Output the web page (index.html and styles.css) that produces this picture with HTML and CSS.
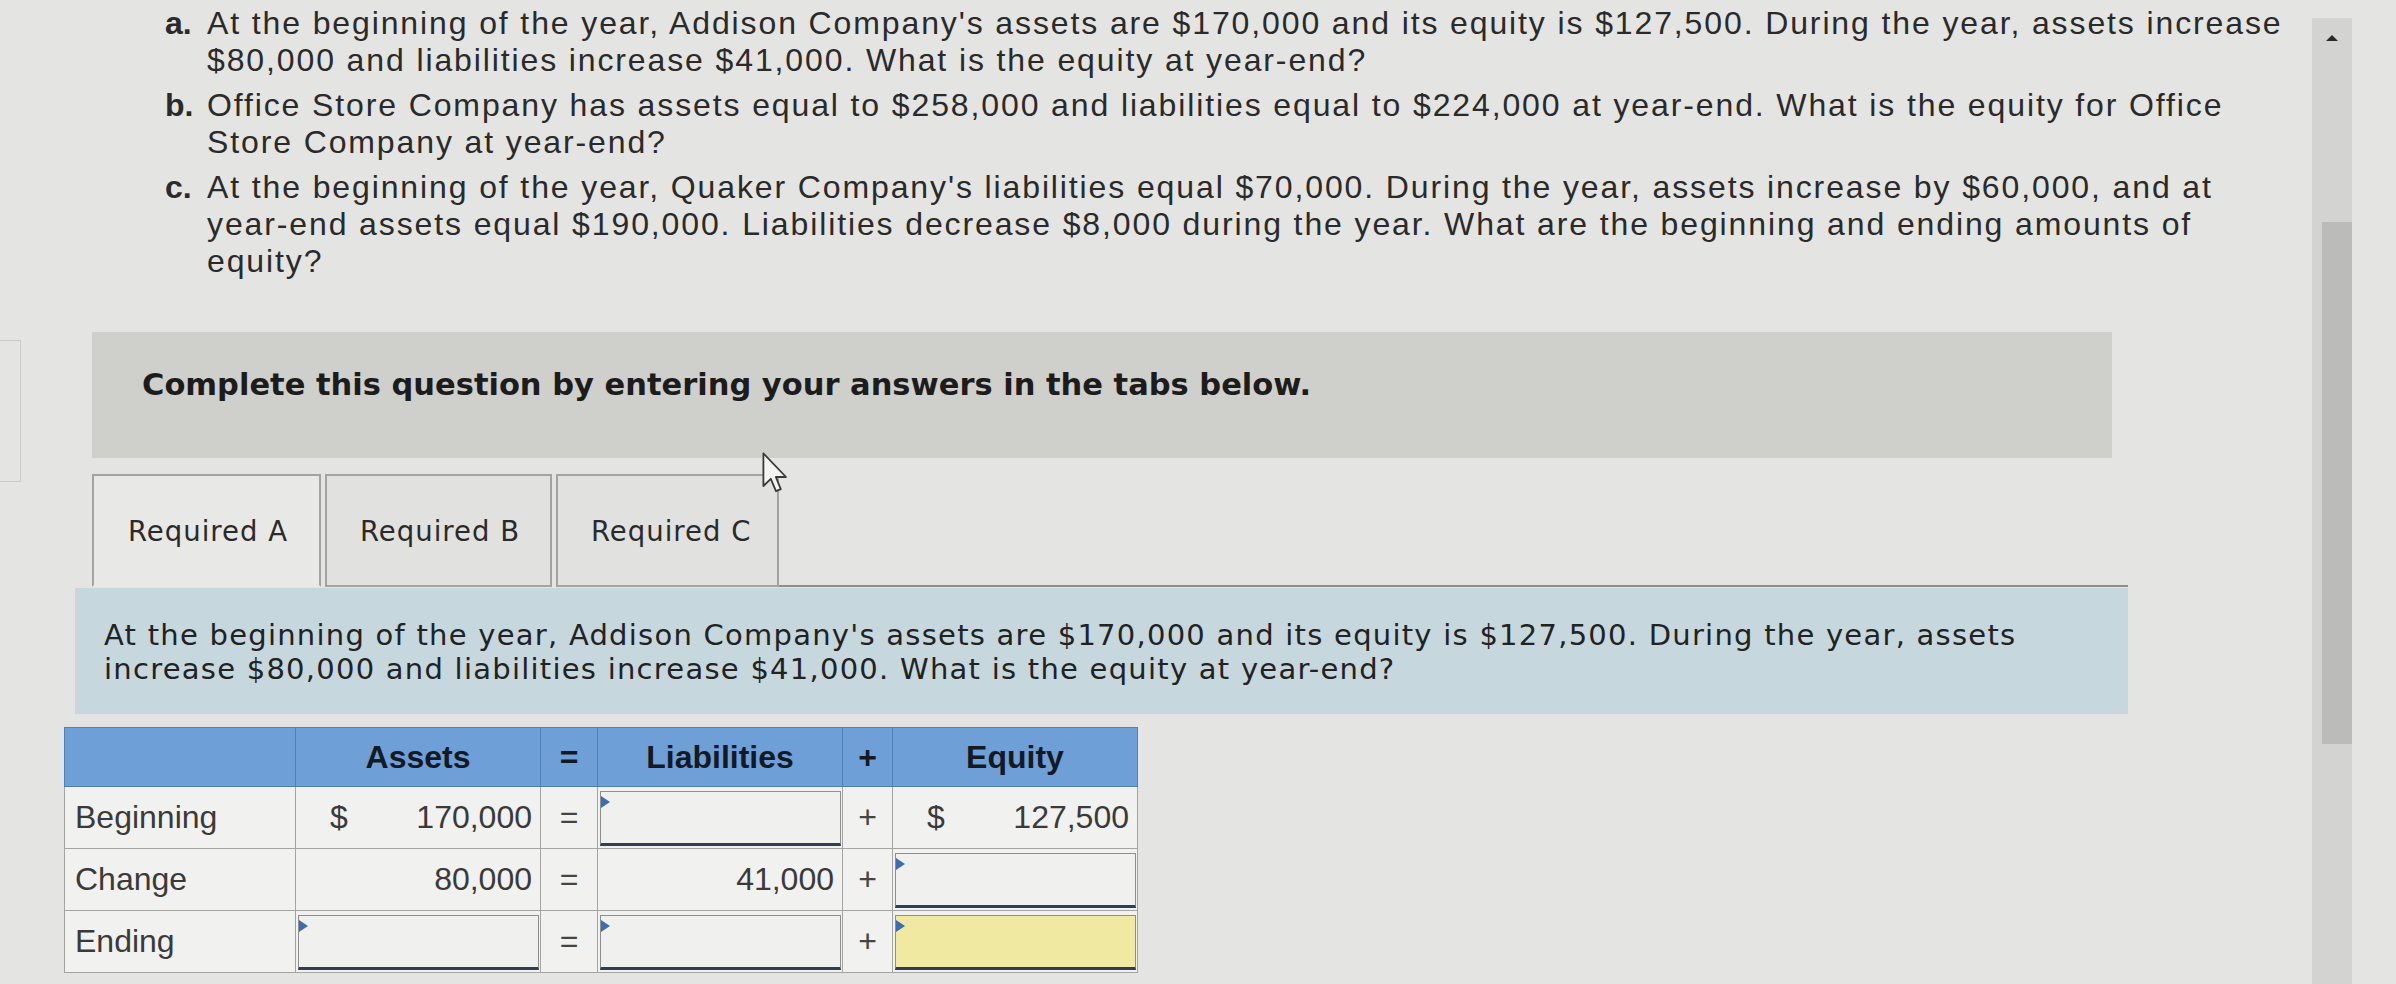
FILE: index.html
```html
<!DOCTYPE html>
<html>
<head>
<meta charset="utf-8">
<link rel="stylesheet" href="styles.css">
</head>
<body>
<div class="main">
  <div class="problems">
    <div class="item"><span class="marker">a.</span><span class="text">At the beginning of the year, Addison Company's assets are $170,000 and its equity is $127,500. During the year, assets increase<br>$80,000 and liabilities increase $41,000. What is the equity at year-end?</span></div>
    <div class="item"><span class="marker">b.</span><span class="text">Office Store Company has assets equal to $258,000 and liabilities equal to $224,000 at year-end. What is the equity for Office<br>Store Company at year-end?</span></div>
    <div class="item"><span class="marker">c.</span><span class="text">At the beginning of the year, Quaker Company's liabilities equal $70,000. During the year, assets increase by $60,000, and at<br>year-end assets equal $190,000. Liabilities decrease $8,000 during the year. What are the beginning and ending amounts of<br>equity?</span></div>
  </div>

  <div class="banner">Complete this question by entering your answers in the tabs below.</div>

  <div class="tabs">
    <div class="tab active">Required A</div>
    <div class="tab">Required B</div>
    <div class="tab">Required C</div>
    <div class="tab-fill"></div>
  </div>

  <div class="desc">At the beginning of the year, Addison Company's assets are $170,000 and its equity is $127,500. During the year, assets<br>increase $80,000 and liabilities increase $41,000. What is the equity at year-end?</div>

  <table class="eq">
    <colgroup>
      <col class="c-label"><col class="c-amt"><col class="c-op"><col class="c-amt"><col class="c-op2"><col class="c-amt">
    </colgroup>
    <thead>
      <tr><th></th><th>Assets</th><th>=</th><th>Liabilities</th><th>+</th><th>Equity</th></tr>
    </thead>
    <tbody>
      <tr>
        <td class="label">Beginning</td>
        <td><div class="val"><span>$</span><span>170,000</span></div></td>
        <td class="op">=</td>
        <td class="in"><div class="inp"></div></td>
        <td class="op">+</td>
        <td><div class="val"><span>$</span><span>127,500</span></div></td>
      </tr>
      <tr>
        <td class="label">Change</td>
        <td><div class="val"><span></span><span>80,000</span></div></td>
        <td class="op">=</td>
        <td><div class="val"><span></span><span>41,000</span></div></td>
        <td class="op">+</td>
        <td class="in"><div class="inp"></div></td>
      </tr>
      <tr>
        <td class="label">Ending</td>
        <td class="in"><div class="inp"></div></td>
        <td class="op">=</td>
        <td class="in"><div class="inp"></div></td>
        <td class="op">+</td>
        <td class="in"><div class="inp yellow"></div></td>
      </tr>
    </tbody>
  </table>
</div>

<div class="scrollbar">
  <div class="track">
    <div class="arrow"></div>
    <div class="thumb"></div>
  </div>
</div>

<div class="frame-edge"></div>

<svg class="cursor" width="26" height="44" viewBox="0 0 13 22">
  <path d="M0.7,0.7 L0.7,17 L4.4,13.4 L7,19.6 L9.4,18.6 L6.9,12.5 L12,12.5 Z" fill="#f4f4f2" stroke="#3a3a3a" stroke-width="0.9" stroke-linejoin="round"/>
</svg>
</body>
</html>
```

FILE: styles.css
```css
html, body {
  margin: 0;
  padding: 0;
}
body {
  width: 2396px;
  height: 984px;
  overflow: hidden;
  background: #e4e4e2;
  display: flex;
  position: relative;
  color: #2c2c2c;
}
.main {
  flex: 0 0 2312px;
}

/* problem statement */
.problems {
  padding: 5px 0 0 165px;
  font-family: "Liberation Sans", Arial, sans-serif;
  font-size: 32px;
  letter-spacing: 1.88px;
  line-height: 37px;
  color: #2a2a2a;
}
.item {
  display: flex;
  margin-bottom: 8px;
}
.marker {
  flex: 0 0 42px;
  font-weight: 700;
  letter-spacing: 0;
}
.text {
  white-space: nowrap;
}

/* banner */
.banner {
  margin: 52px 0 0 92px;
  width: 1970px;
  height: 104px;
  padding: 0 0 22px 50px;
  background: #cfcfcc;
  display: flex;
  align-items: center;
  font-family: "DejaVu Sans", Verdana, sans-serif;
  font-weight: 700;
  font-size: 30.5px;
  color: #1c1c1c;
  white-space: nowrap;
}

/* tabs */
.tabs {
  display: flex;
  margin: 16px 0 0 92px;
  width: 2036px;
  height: 113px;
}
.tab {
  box-sizing: border-box;
  height: 113px;
  padding-left: 33px;
  display: flex;
  align-items: center;
  border: 2px solid #a3a3a1;
  background: #e1e1df;
  font-family: "DejaVu Sans", Verdana, sans-serif;
  font-size: 27.5px;
  letter-spacing: 1px;
  color: #2a2a2a;
  margin-right: 4px;
  white-space: nowrap;
}
.tab:nth-child(1) { width: 229px; padding-left: 34px; }
.tab:nth-child(2) { width: 227px; }
.tab:nth-child(3) { width: 223px; margin-right: 0; }
.tab.active {
  border-bottom-color: transparent;
  background: #e8e8e6;
}
.tab-fill {
  flex: 1;
  border-bottom: 2px solid #8e8e8c;
}

/* description */
.desc {
  box-sizing: border-box;
  margin: 1px 0 0 75px;
  width: 2053px;
  height: 126px;
  padding: 30px 0 0 29px;
  background: #c6d7de;
  font-family: "DejaVu Sans", Verdana, sans-serif;
  font-size: 29px;
  letter-spacing: 1.25px;
  line-height: 34px;
  color: #222;
  white-space: nowrap;
}

/* equation table */
.eq {
  margin: 13px 0 0 64px;
  border-collapse: collapse;
  table-layout: fixed;
  width: 1071px;
  font-family: "Liberation Sans", Arial, sans-serif;
  font-size: 32px;
  color: #383838;
}
.c-label { width: 231px; }
.c-amt { width: 245px; }
.c-op { width: 57px; }
.c-op2 { width: 50px; }
.eq th {
  height: 58px;
  background: #6f9fd7;
  border: 1px solid #4f80ba;
  font-weight: 700;
  color: #141a24;
  padding: 0;
  text-align: center;
  vertical-align: middle;
}
.eq td {
  height: 58px;
  border: 1px solid #a4a4a2;
  background: #f1f1ef;
  padding: 0;
  vertical-align: middle;
}
.eq td.label {
  padding-left: 10px;
  color: #3a3a3a;
}
.eq td.op {
  text-align: center;
  color: #444;
}
.eq td.in {
  padding: 2px 1px 1px 2px;
}
.val {
  display: flex;
  justify-content: space-between;
  padding: 0 8px 0 34px;
  color: #3a3a3a;
}
.inp {
  box-sizing: border-box;
  position: relative;
  height: 55px;
  border: 1px solid #8e8e8c;
  border-bottom: 3px solid #2f3d56;
  background: #f0f0ee;
}
.inp::before {
  content: "";
  position: absolute;
  left: 0;
  top: 4px;
  border-left: 9px solid #3b6db0;
  border-top: 6px solid transparent;
  border-bottom: 6px solid transparent;
}
.inp.yellow {
  background: #efe9a2;
}

/* scrollbar */
.scrollbar {
  flex: 0 0 40px;
  padding-top: 18px;
}
.track {
  height: 966px;
  background: #d3d3d1;
  display: flex;
  flex-direction: column;
  align-items: center;
}
.arrow {
  margin-top: 17px;
  width: 0;
  height: 0;
  border-left: 6px solid transparent;
  border-right: 6px solid transparent;
  border-bottom: 6px solid #2a2a2a;
}
.thumb {
  margin-top: 181px;
  align-self: stretch;
  margin-left: 10px;
  height: 522px;
  background: #bbbbb9;
}

/* decorations over the page */
.frame-edge {
  position: absolute;
  left: 0;
  top: 340px;
  width: 20px;
  height: 140px;
  border: 1px solid #cacac8;
  border-left: none;
}
.cursor {
  position: absolute;
  left: 762px;
  top: 452px;
}
```
